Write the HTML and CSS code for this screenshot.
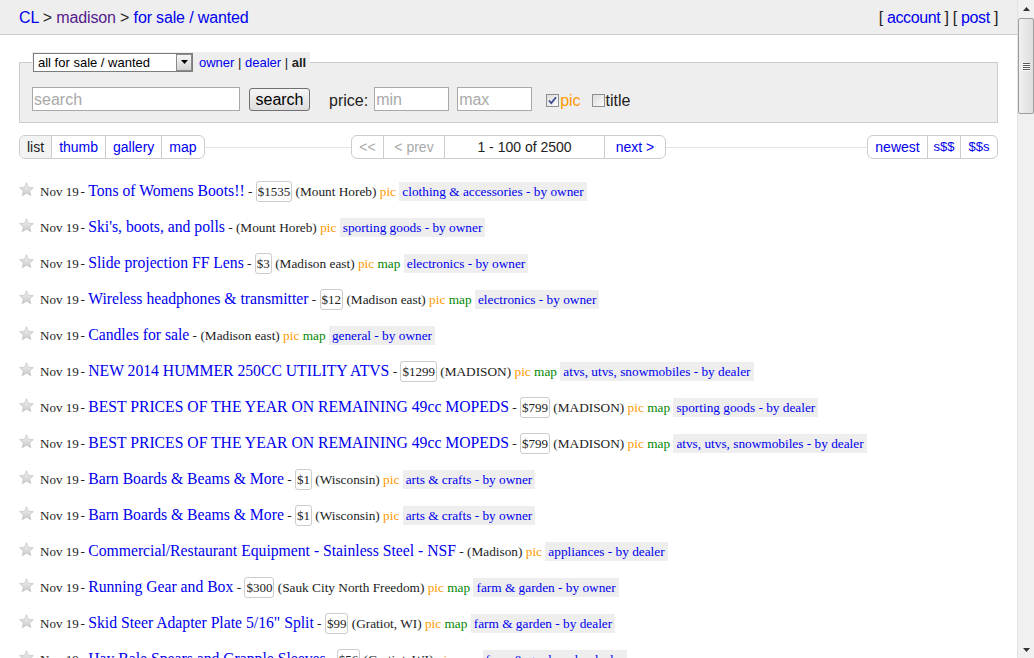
FILE: index.html
```html
<!DOCTYPE html>
<html lang="en">
<head>
<meta charset="utf-8">
<title>madison for sale / wanted - craigslist</title>
<link rel="stylesheet" href="styles.css">
</head>
<body>
<svg class="defs" width="0" height="0" aria-hidden="true">
  <defs>
    <linearGradient id="stargrad" x1="0" y1="0" x2="0" y2="1">
      <stop offset="0" stop-color="#f2f2f2"/>
      <stop offset="1" stop-color="#c9c9c9"/>
    </linearGradient>
    <symbol id="star" viewBox="0 0 16 16">
      <polygon points="8,0.8 10.1,5.6 15.3,6 11.4,9.5 12.6,14.6 8,11.9 3.4,14.6 4.6,9.5 0.7,6 5.9,5.6" fill="url(#stargrad)" stroke="#c4c4c4" stroke-width="0.8" stroke-linejoin="round"/>
    </symbol>
  </defs>
</svg>
<div class="page">
  <header class="topbar">
    <nav class="crumbs"><a href="#">CL</a> &gt; <a class="visited" href="#">madison</a> &gt; <a href="#">for sale / wanted</a></nav>
    <div class="userlinks">[ <a href="#">account</a> ] [ <a href="#">post</a> ]</div>
  </header>

  <main class="content">
    <form class="searchform">
      <fieldset class="searchfs">
        <legend class="catlegend">
          <span class="selectwrap">
            <select class="catselect"><option>all for sale / wanted</option></select>
            <span class="selectarrow"><svg width="7" height="4" viewBox="0 0 7 4"><polygon points="0,0 7,0 3.5,4" fill="#000"/></svg></span>
          </span>
          <span class="owners"><a href="#">owner</a> | <a href="#">dealer</a> | <b>all</b></span>
        </legend>
        <div class="searchrow">
          <input class="query" type="text" placeholder="search">
          <button class="searchbtn" type="button">search</button>
          <span class="pricelabel">price:</span>
          <input class="priceinput min" type="text" placeholder="min">
          <input class="priceinput max" type="text" placeholder="max">
          <span class="cbox checked"><svg width="11" height="11" viewBox="0 0 11 11"><path d="M2 5.5 L4.3 8 L9 2.2" fill="none" stroke="#3b4f8f" stroke-width="1.8"/></svg></span>
          <span class="piclabel">pic</span>
          <span class="cbox titlebox"></span>
          <span class="titlelabel">title</span>
        </div>
      </fieldset>
    </form>

    <div class="paginator">
      <div class="group views">
        <span class="item cur">list</span><a class="item" href="#">thumb</a><a class="item" href="#">gallery</a><a class="item" href="#">map</a>
      </div>
      <div class="group pages">
        <span class="item dis first">&lt;&lt;</span><span class="item dis prev">&lt; prev</span><span class="item range">1 - 100 of 2500</span><a class="item next" href="#">next &gt;</a>
      </div>
      <div class="group sorts">
        <a class="item newest" href="#">newest</a><a class="item lowhigh" href="#">s$$</a><a class="item highlow" href="#">$$s</a>
      </div>
    </div>

    <ul class="rows">
      <li class="row"><svg class="star"><use href="#star"/></svg><span class="date">Nov 19</span> - <a class="title" href="#">Tons of Womens Boots!!</a> - <span class="price">$1535</span> <span class="loc">(Mount Horeb)</span> <span class="pic">pic</span> <a class="cat" href="#">clothing &amp; accessories - by owner</a></li>
      <li class="row"><svg class="star"><use href="#star"/></svg><span class="date">Nov 19</span> - <a class="title" href="#">Ski's, boots, and polls</a> - <span class="loc">(Mount Horeb)</span> <span class="pic">pic</span> <a class="cat" href="#">sporting goods - by owner</a></li>
      <li class="row"><svg class="star"><use href="#star"/></svg><span class="date">Nov 19</span> - <a class="title" href="#">Slide projection FF Lens</a> - <span class="price">$3</span> <span class="loc">(Madison east)</span> <span class="pic">pic</span> <span class="map">map</span> <a class="cat" href="#">electronics - by owner</a></li>
      <li class="row"><svg class="star"><use href="#star"/></svg><span class="date">Nov 19</span> - <a class="title" href="#">Wireless headphones &amp; transmitter</a> - <span class="price">$12</span> <span class="loc">(Madison east)</span> <span class="pic">pic</span> <span class="map">map</span> <a class="cat" href="#">electronics - by owner</a></li>
      <li class="row"><svg class="star"><use href="#star"/></svg><span class="date">Nov 19</span> - <a class="title" href="#">Candles for sale</a> - <span class="loc">(Madison east)</span> <span class="pic">pic</span> <span class="map">map</span> <a class="cat" href="#">general - by owner</a></li>
      <li class="row"><svg class="star"><use href="#star"/></svg><span class="date">Nov 19</span> - <a class="title" href="#">NEW 2014 HUMMER 250CC UTILITY ATVS</a> - <span class="price">$1299</span> <span class="loc">(MADISON)</span> <span class="pic">pic</span> <span class="map">map</span> <a class="cat" href="#">atvs, utvs, snowmobiles - by dealer</a></li>
      <li class="row"><svg class="star"><use href="#star"/></svg><span class="date">Nov 19</span> - <a class="title" href="#">BEST PRICES OF THE YEAR ON REMAINING 49cc MOPEDS</a> - <span class="price">$799</span> <span class="loc">(MADISON)</span> <span class="pic">pic</span> <span class="map">map</span> <a class="cat" href="#">sporting goods - by dealer</a></li>
      <li class="row"><svg class="star"><use href="#star"/></svg><span class="date">Nov 19</span> - <a class="title" href="#">BEST PRICES OF THE YEAR ON REMAINING 49cc MOPEDS</a> - <span class="price">$799</span> <span class="loc">(MADISON)</span> <span class="pic">pic</span> <span class="map">map</span> <a class="cat" href="#">atvs, utvs, snowmobiles - by dealer</a></li>
      <li class="row"><svg class="star"><use href="#star"/></svg><span class="date">Nov 19</span> - <a class="title" href="#">Barn Boards &amp; Beams &amp; More</a> - <span class="price">$1</span> <span class="loc">(Wisconsin)</span> <span class="pic">pic</span> <a class="cat" href="#">arts &amp; crafts - by owner</a></li>
      <li class="row"><svg class="star"><use href="#star"/></svg><span class="date">Nov 19</span> - <a class="title" href="#">Barn Boards &amp; Beams &amp; More</a> - <span class="price">$1</span> <span class="loc">(Wisconsin)</span> <span class="pic">pic</span> <a class="cat" href="#">arts &amp; crafts - by owner</a></li>
      <li class="row"><svg class="star"><use href="#star"/></svg><span class="date">Nov 19</span> - <a class="title" href="#">Commercial/Restaurant Equipment - Stainless Steel - NSF</a> - <span class="loc">(Madison)</span> <span class="pic">pic</span> <a class="cat" href="#">appliances - by dealer</a></li>
      <li class="row"><svg class="star"><use href="#star"/></svg><span class="date">Nov 19</span> - <a class="title" href="#">Running Gear and Box</a> - <span class="price">$300</span> <span class="loc">(Sauk City North Freedom)</span> <span class="pic">pic</span> <span class="map">map</span> <a class="cat" href="#">farm &amp; garden - by owner</a></li>
      <li class="row"><svg class="star"><use href="#star"/></svg><span class="date">Nov 19</span> - <a class="title" href="#">Skid Steer Adapter Plate 5/16" Split</a> - <span class="price">$99</span> <span class="loc">(Gratiot, WI)</span> <span class="pic">pic</span> <span class="map">map</span> <a class="cat" href="#">farm &amp; garden - by dealer</a></li>
      <li class="row"><svg class="star"><use href="#star"/></svg><span class="date">Nov 19</span> - <a class="title" href="#">Hay Bale Spears and Grapple Sleeves</a> - <span class="price">$56</span> <span class="loc">(Gratiot, WI)</span> <span class="pic">pic</span> <span class="map">map</span> <a class="cat" href="#">farm &amp; garden - by dealer</a></li>
    </ul>
  </main>
</div>

<div class="scrollbar" aria-hidden="true">
  <div class="sb-btn up"><svg width="7" height="4" viewBox="0 0 7 4"><polygon points="0,4 7,4 3.5,0" fill="#333"/></svg></div>
  <div class="sb-thumb"><span class="grip"></span><span class="grip"></span><span class="grip"></span><span class="grip"></span></div>
  <div class="sb-track"></div>
  <div class="sb-btn down"><svg width="7" height="4" viewBox="0 0 7 4"><polygon points="0,0 7,0 3.5,4" fill="#333"/></svg></div>
</div>
</body>
</html>
```

FILE: styles.css
```css
* { box-sizing: border-box; }

html { overflow: hidden; }

body {
  margin: 0;
  background: #fff;
  color: #222;
  font-family: "Liberation Sans", Arial, sans-serif;
}

a { color: #00e; text-decoration: none; }
a.visited { color: #551a8b; }

.defs { position: absolute; width: 0; height: 0; }

.page { margin-right: 17px; }

/* header */
.topbar {
  height: 35px;
  background: #eee;
  border-bottom: 1px solid #ccc;
  display: flex;
  justify-content: space-between;
  align-items: center;
  padding: 1px 19px 0;
  font-size: 16px;
  letter-spacing: -0.15px;
}
.userlinks { letter-spacing: -0.35px; }

.content { padding: 0 19px; }

/* search form */
.searchform { margin: 17px 0 0; }

.searchfs {
  margin: 0;
  min-width: 0;
  padding: 15px 12px 11px;
  border: 1px solid #ccc;
  background: #eee;
}

.catlegend {
  padding: 0 4px 0 1px;
  background: #eee;
  font-size: 13px;
  height: 20px;
  display: flex;
  align-items: center;
}

.selectwrap {
  position: relative;
  display: inline-block;
  width: 160px;
  height: 19px;
}

.catselect {
  appearance: none;
  -webkit-appearance: none;
  width: 160px;
  height: 19px;
  margin: 0;
  border: 1px solid #7c7c7c;
  border-radius: 0;
  background: #fff;
  color: #000;
  font: 13px "Liberation Sans", Arial, sans-serif;
  padding: 0 0 0 4px;
}

.selectarrow {
  position: absolute;
  top: 1px;
  right: 1px;
  width: 16px;
  height: 17px;
  border: 1px solid #8a8a8a;
  background: linear-gradient(#f6f6f6, #d4d4d4);
  display: flex;
  align-items: center;
  justify-content: center;
}

.owners { margin-left: 6px; color: #222; }
.owners b { color: #222; }

.searchrow {
  display: flex;
  align-items: center;
  height: 24px;
  font-size: 16px;
}

.query, .priceinput {
  height: 24px;
  border: 1px solid #a9a9a9;
  background: #fff;
  font: 16px "Liberation Sans", Arial, sans-serif;
  padding: 2px 1px 0;
  margin: 0;
}
.query { width: 208px; }
.query::placeholder, .priceinput::placeholder { color: #a9a9a9; }

.searchbtn {
  margin: 1px 0 0 9px;
  width: 61px;
  height: 23px;
  padding: 1px 0 0;
  border: 1px solid #707070;
  border-radius: 3px;
  background: linear-gradient(#f6f6f6, #dedede);
  color: #000;
  font: 16px "Liberation Sans", Arial, sans-serif;
}

.pricelabel, .piclabel, .titlelabel {
  line-height: 18px;
  margin-top: 4px;
}

.pricelabel { margin-left: 19px; color: #222; }
.priceinput { width: 75px; }
.priceinput.min { margin-left: 6px; }
.priceinput.max { margin-left: 8px; }

.cbox {
  width: 13px;
  height: 13px;
  margin-top: 3px;
  border: 1px solid #8e8f8f;
  background: linear-gradient(135deg, #dcdcdc, #fbfbfb);
  display: flex;
  align-items: center;
  justify-content: center;
}
.cbox.checked { margin-left: 14px; }
.piclabel { margin-left: 1px; color: #f90; }
.titlebox { margin-left: 11px; }
.titlelabel { margin-left: 1px; color: #222; }

/* paginator */
.paginator {
  margin-top: 12px;
  height: 24px;
  display: grid;
  grid-template-columns: 1fr auto 1fr;
  align-items: center;
  background: linear-gradient(#e4e4e4, #e4e4e4) center / 100% 1px no-repeat;
}

.group {
  display: inline-flex;
  height: 24px;
  border: 1px solid #ccc;
  border-radius: 6px;
  background: #fff;
  overflow: hidden;
  font-size: 14px;
}
.views { justify-self: start; }
.sorts { justify-self: end; }

.item {
  line-height: 22px;
  padding: 0 7px;
  border-left: 1px solid #ccc;
  text-align: center;
}
.item:first-child { border-left: 0; }
.item.cur { background: #f3f3f3; color: #222; }
.item.dis { color: #aaa; }
.item.first { width: 31px; padding: 0; }
.item.prev { width: 61px; padding: 0; }
.item.range { width: 160px; padding: 0; color: #222; }
.item.next { width: 61px; padding: 0; }
.item.newest { width: 59px; padding: 0; }
.item.lowhigh { width: 33px; padding: 0; font-size: 13px; }
.item.highlow { width: 37px; padding: 0; font-size: 13px; }

/* rows */
.rows {
  list-style: none;
  margin: 14px 0 0;
  padding: 0;
}

.row {
  height: 36px;
  white-space: nowrap;
  overflow: hidden;
  font: 13.3px/36px "Liberation Serif", "Times New Roman", serif;
  color: #222;
}

.star {
  width: 15px;
  height: 15px;
  margin-right: 6px;
  vertical-align: -1px;
}

.date { font-size: 13px; margin-right: -1.5px; }

.title { font-size: 15.7px; }

.price {
  border: 1px solid #ccc;
  border-radius: 3px;
  padding: 2px 1px;
  font-size: 13px;
  background: #fff;
}

.pic { color: #f90; }
.map { color: #080; }

.cat {
  background: #eee;
  padding: 2px 3px;
}

/* fake scrollbar */
.scrollbar {
  position: fixed;
  top: 0;
  right: 0;
  width: 17px;
  height: 100%;
  background: #f0f0f0;
  border-left: 1px solid #e3e3e3;
  display: flex;
  flex-direction: column;
}
.sb-btn {
  height: 17px;
  display: flex;
  align-items: center;
  justify-content: center;
  flex: none;
}
.sb-thumb {
  flex: none;
  height: 96px;
  margin: 1px 0 0;
  border: 1px solid #9d9d9d;
  border-radius: 2px;
  background: linear-gradient(90deg, #f0f0f0, #dedede);
  display: flex;
  flex-direction: column;
  align-items: center;
  justify-content: center;
  gap: 1px;
}
.grip {
  width: 7px;
  height: 1px;
  background: #5a5a5a;
  box-shadow: 0 1px 0 #fff;
}
.sb-track { flex: 1; }
```
